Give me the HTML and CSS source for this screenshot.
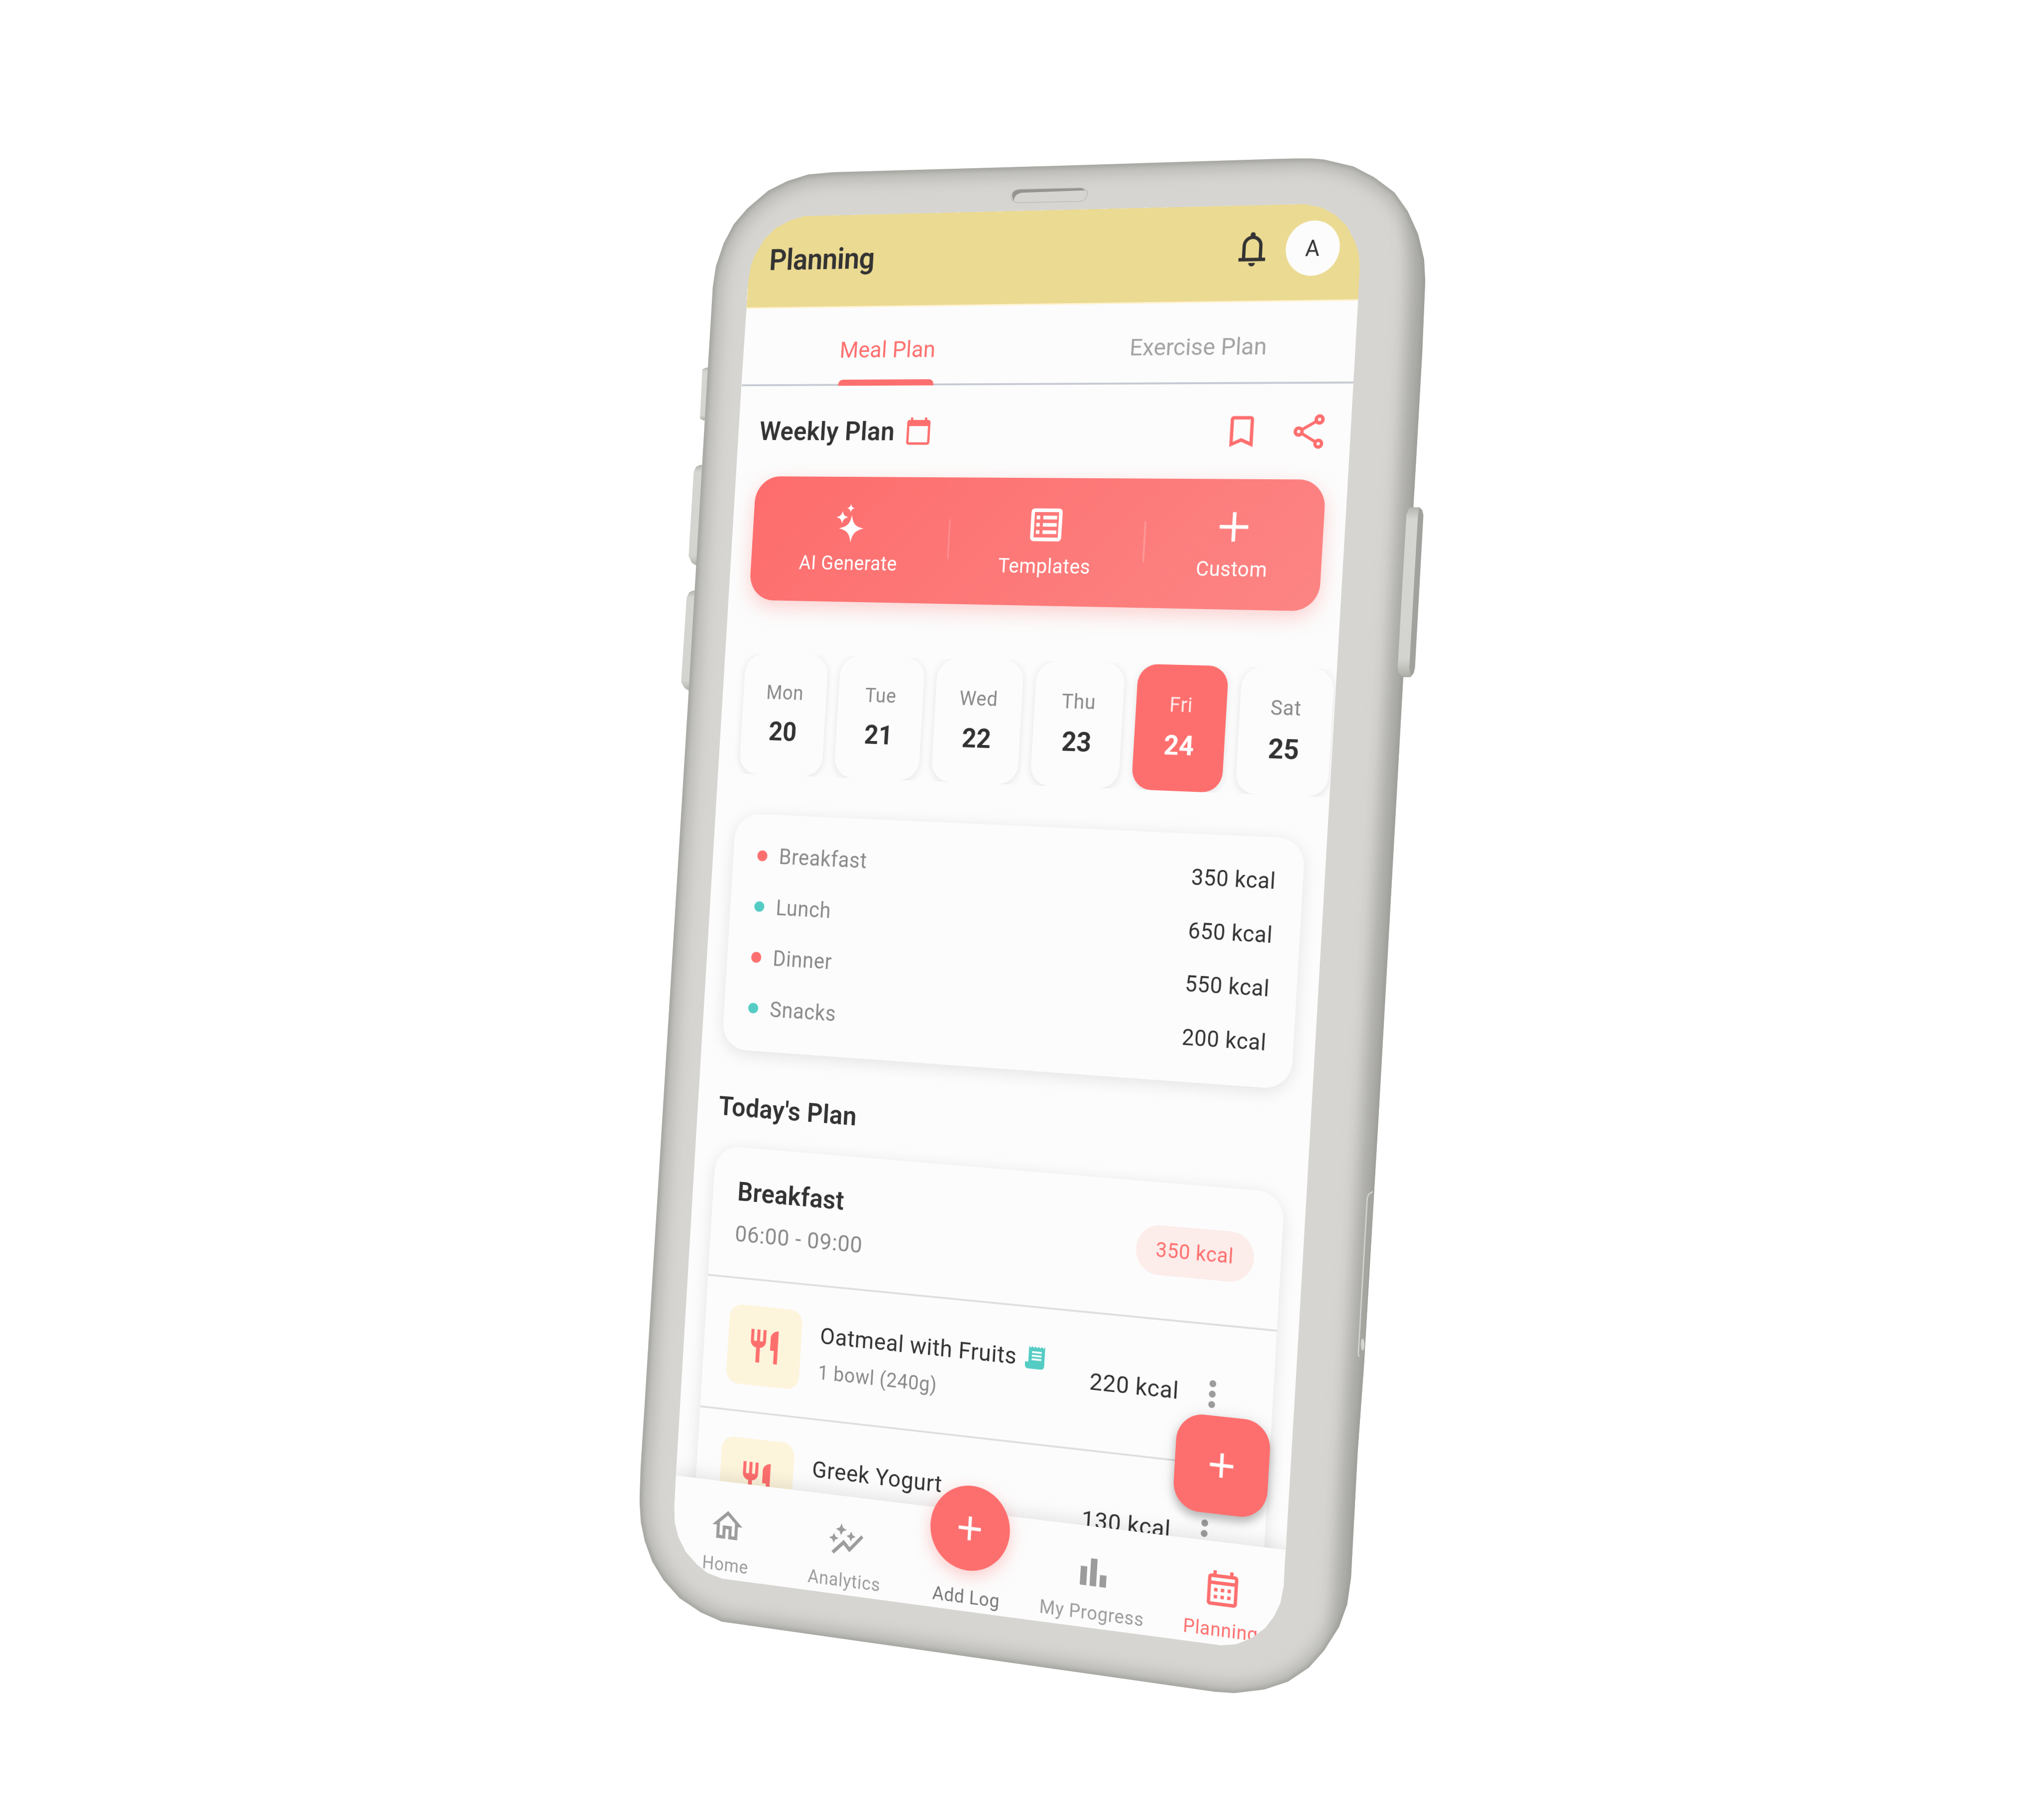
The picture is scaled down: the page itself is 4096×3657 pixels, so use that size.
FILE: index.html
```html
<!DOCTYPE html>
<html lang="en">
<head>
<meta charset="utf-8">
<title>Planning</title>
<link rel="stylesheet" href="styles.css">
</head>
<body>
<svg class="defs" aria-hidden="true">
  <symbol id="i-bell" viewBox="0 0 24 24"><path d="M4 19v-2h2v-7q0-2.075 1.25-3.687T10.5 4.2v-.7q0-.625.438-1.062T12 2t1.063.438T13.5 3.5v.7q2 .5 3.25 2.113T18 10v7h2v2zm8 3q-.825 0-1.412-.587T10 20h4q0 .825-.587 1.413T12 22m-4-5h8v-7q0-1.65-1.175-2.825T12 6 9.175 7.175 8 10z"/></symbol>
  <symbol id="i-cal" viewBox="0 0 24 24"><path d="M20 3h-1V1h-2v2H7V1H5v2H4c-1.1 0-2 .9-2 2v16c0 1.1.9 2 2 2h16c1.1 0 2-.9 2-2V5c0-1.1-.9-2-2-2zm0 18H4V8h16v13z"/></symbol>
  <symbol id="i-mark" viewBox="0 0 24 24"><path d="M17 3H7c-1.1 0-2 .9-2 2v16l7-3 7 3V5c0-1.1-.9-2-2-2zm0 15l-5-2.18L7 18V5h10v13z"/></symbol>
  <symbol id="i-share" viewBox="0 0 24 24"><path d="M18 16.08c-.76 0-1.44.3-1.96.77L8.91 12.7c.05-.23.09-.46.09-.7s-.04-.47-.09-.7l7.05-4.11c.54.5 1.25.81 2.04.81 1.66 0 3-1.34 3-3s-1.34-3-3-3-3 1.34-3 3c0 .24.04.47.09.7L8.04 9.81C7.5 9.31 6.79 9 6 9c-1.66 0-3 1.34-3 3s1.34 3 3 3c.79 0 1.5-.31 2.04-.81l7.12 4.16c-.05.21-.08.43-.08.65 0 1.61 1.31 2.92 2.92 2.92s2.92-1.31 2.92-2.92-1.31-2.92-2.92-2.92zM18 4c.55 0 1 .45 1 1s-.45 1-1 1-1-.45-1-1 .45-1 1-1zM6 13c-.55 0-1-.45-1-1s.45-1 1-1 1 .45 1 1-.45 1-1 1zm12 7.02c-.55 0-1-.45-1-1s.45-1 1-1 1 .45 1 1-.45 1-1 1z"/></symbol>
  <symbol id="i-stars" viewBox="0 0 26 26"><path d="M14 8.2C14.9 13.8 16.6 15.4 22.1 16.5C16.6 17.8 14.9 19.6 14 25.2C13.1 19.6 11.4 17.8 5.9 16.5C11.4 15.4 13.1 13.8 14 8.2zM7.8 5.9C8.4 8.4 9.2 9.2 11.9 9.7C9.2 10.3 8.4 11.1 7.8 13.6C7.2 11.1 6.4 10.3 3.7 9.7C6.4 9.2 7.2 8.4 7.8 5.9zM13 1.5C13.4 3.3 13.9 3.8 15.5 4.2C13.9 4.6 13.4 5.1 13 6.9C12.6 5.1 12.1 4.6 10.5 4.2C12.1 3.8 12.6 3.3 13 1.5z"/></symbol>
  <symbol id="i-list" viewBox="0 0 24 24"><path fill-rule="evenodd" d="M5 3h14a2 2 0 0 1 2 2v14a2 2 0 0 1-2 2H5a2 2 0 0 1-2-2V5a2 2 0 0 1 2-2zm0 2v14h14V5zM6.2 7h2v2h-2zM10 7h8v2h-8zM6.2 11h2v2h-2zM10 11h8v2h-8zM6.2 15h2v2h-2zM10 15h8v2h-8z"/></symbol>
  <symbol id="i-plus-lg" viewBox="0 0 26 26"><path d="M11.9 4.4h2.2v7.5h7.5v2.2h-7.5v7.5h-2.2v-7.5H4.4v-2.2h7.5z"/></symbol>
  <symbol id="i-plus" viewBox="0 0 24 24"><path d="M19 13h-6v6h-2v-6H5v-2h6V5h2v6h6z"/></symbol>
  <symbol id="i-food" viewBox="0 0 24 24"><path d="M11 9H9V2H7v7H5V2H3v7c0 2.12 1.66 3.84 3.75 3.97V22h2.5v-9.03C11.34 12.84 13 11.12 13 9V2h-2v7zm5-3v8h2.5v8H21V2c-2.76 0-5 2.24-5 4z"/></symbol>
  <symbol id="i-receipt" viewBox="0 0 24 24"><path fill-rule="evenodd" d="M19.5 3.5L18 2l-1.5 1.5L15 2l-1.5 1.5L12 2l-1.5 1.5L9 2 7.5 3.5 6 2v14H3v3c0 1.66 1.34 3 3 3h12c1.66 0 3-1.34 3-3V2zM9 6.4h9v1.6H9zM9 9.6h9v1.6H9zM9 12.8h9v1.6H9z"/></symbol>
  <symbol id="i-more" viewBox="0 0 24 24"><path d="M12 8c1.1 0 2-.9 2-2s-.9-2-2-2-2 .9-2 2 .9 2 2 2zm0 2c-1.1 0-2 .9-2 2s.9 2 2 2 2-.9 2-2-.9-2-2-2zm0 6c-1.1 0-2 .9-2 2s.9 2 2 2 2-.9 2-2-.9-2-2-2z"/></symbol>
  <symbol id="i-home" viewBox="0 0 24 24"><path d="M12 5.69l5 4.5V18h-2v-6H9v6H7v-7.81l5-4.5M12 3L2 12h3v8h6v-6h2v6h6v-8h3L12 3z"/></symbol>
  <symbol id="i-graph" viewBox="0 0 24 24"><path d="M14.06 9.94L12 9l2.06-.94L15 6l.94 2.06L18 9l-2.06.94L15 12zM4 14l.94-2.06L7 11l-2.06-.94L4 8l-.94 2.06L1 11l2.06.94zM8.5 9l1.09-2.41L12 5.5 9.59 4.41 8.5 2 7.41 4.41 5 5.5l2.41 1.09zM4.5 20.5l6-6.01 4 4L23 8.93l-1.41-1.41-7.09 7.97-4-4L3 19z"/></symbol>
  <symbol id="i-bars" viewBox="0 0 24 24"><path d="M4 9h4v11H4zM16 13h4v7h-4zM10 4h4v16h-4z"/></symbol>
  <symbol id="i-month" viewBox="0 0 24 24"><path d="M19 4h-1V2h-2v2H8V2H6v2H5c-1.11 0-1.99.9-1.99 2L3 20c0 1.1.89 2 2 2h14c1.1 0 2-.9 2-2V6c0-1.1-.9-2-2-2zm0 16H5V10h14v10zm0-12H5V6h14v2zM9 14H7v-2h2v2zm4 0h-2v-2h2v2zm4 0h-2v-2h2v2zm-8 4H7v-2h2v2zm4 0h-2v-2h2v2zm4 0h-2v-2h2v2z"/></symbol>
</svg>

<div class="screen">
  <div class="app">
    <header class="bar">
      <h1 class="bar-title">Planning</h1>
      <svg class="icon bell"><use href="#i-bell"/></svg>
      <span class="avatar">A</span>
    </header>
    <nav class="tabs">
      <span class="tab tab-on"><span class="tab-label">Meal Plan</span></span>
      <span class="tab">Exercise Plan</span>
    </nav>
    <main class="main">
      <div class="week-head">
        <h2 class="h2">Weekly Plan</h2>
        <svg class="icon cal"><use href="#i-cal"/></svg>
        <svg class="icon push"><use href="#i-mark"/></svg>
        <svg class="icon share"><use href="#i-share"/></svg>
      </div>
      <div class="actions">
        <div class="action"><svg class="icon26"><use href="#i-stars"/></svg><span>AI Generate</span></div>
        <i class="sep"></i>
        <div class="action"><svg class="icon26"><use href="#i-list"/></svg><span>Templates</span></div>
        <i class="sep"></i>
        <div class="action"><svg class="icon26"><use href="#i-plus-lg"/></svg><span>Custom</span></div>
      </div>
      <div class="days">
        <div class="day"><span class="dow">Mon</span><b class="num">20</b></div>
        <div class="day"><span class="dow">Tue</span><b class="num">21</b></div>
        <div class="day"><span class="dow">Wed</span><b class="num">22</b></div>
        <div class="day"><span class="dow">Thu</span><b class="num">23</b></div>
        <div class="day day-on"><span class="dow">Fri</span><b class="num">24</b></div>
        <div class="day"><span class="dow">Sat</span><b class="num">25</b></div>
      </div>
      <section class="card summary">
        <div class="row"><i class="dot"></i><span>Breakfast</span><b class="kcal">350 kcal</b></div>
        <div class="row"><i class="dot teal"></i><span>Lunch</span><b class="kcal">650 kcal</b></div>
        <div class="row"><i class="dot"></i><span>Dinner</span><b class="kcal">550 kcal</b></div>
        <div class="row"><i class="dot teal"></i><span>Snacks</span><b class="kcal">200 kcal</b></div>
      </section>
      <h2 class="h2 today">Today's Plan</h2>
      <section class="card meal">
        <div class="meal-head">
          <div class="stack"><h3 class="meal-name">Breakfast</h3><span class="time">06:00 - 09:00</span></div>
          <span class="badge">350 kcal</span>
        </div>
        <div class="item">
          <span class="thumb"><svg class="icon"><use href="#i-food"/></svg></span>
          <div class="item-text">
            <span class="item-name">Oatmeal with Fruits<svg class="receipt"><use href="#i-receipt"/></svg></span>
            <span class="item-sub">1 bowl (240g)</span>
          </div>
          <b class="item-kcal">220 kcal</b>
          <span class="more"><svg class="icon"><use href="#i-more"/></svg></span>
        </div>
        <div class="item">
          <span class="thumb"><svg class="icon"><use href="#i-food"/></svg></span>
          <div class="item-text">
            <span class="item-name">Greek Yogurt</span>
            <span class="item-sub">1 cup (150g)</span>
          </div>
          <b class="item-kcal">130 kcal</b>
          <span class="more"><svg class="icon"><use href="#i-more"/></svg></span>
        </div>
      </section>
    </main>
    <nav class="bottom">
      <div class="tabitem"><svg class="icon"><use href="#i-home"/></svg><span>Home</span></div>
      <div class="tabitem"><svg class="icon"><use href="#i-graph"/></svg><span>Analytics</span></div>
      <div class="tabitem add"><span class="add-btn"><svg class="icon"><use href="#i-plus"/></svg></span><span>Add Log</span></div>
      <div class="tabitem"><svg class="icon"><use href="#i-bars"/></svg><span>My Progress</span></div>
      <div class="tabitem here"><svg class="icon"><use href="#i-month"/></svg><span>Planning</span></div>
    </nav>
    <span class="fab"><svg class="icon"><use href="#i-plus"/></svg></span>
  </div>
</div>

<svg class="phone" viewBox="0 0 4480 4000" aria-hidden="true">
  <defs>
    <path id="outline" d="M1560 732L1566 631L1573 585L1590 535L1612 493L1642 458L1688 419L1730 398L1776 383.5L1831 378.5L2320 364.5L2846 348L2880 348L2909 350.5L2974 366L3020 390L3064 423L3093 464L3116 515L3129 570L3131.5 618L3125 774L3111 1020L3082.5 1502L3031 2420L2997 3000L2983 3193L2968.5 3467L2960 3526L2942 3576L2909 3628L2876 3665L2830 3696L2777 3713.5L2712 3721L2668 3718L2240 3657L1586 3564L1540 3544L1493 3512.5L1458 3473L1433 3432L1416.5 3387L1408 3346L1405 3300L1407.5 3225L1415.5 3100L1460 2380L1512.5 1530L1557 780Z"/>
    <path id="hole" d="M1768 475L1737 484L1705 501L1680 525L1659 560L1650 583L1645 612L1641.5 642L1640 679L1629 847L1600.5 1320L1534 2420L1493.5 3100L1485 3243L1481.5 3310L1482.5 3346L1490.5 3378.5L1507 3411L1530.5 3437.5L1554 3457L1586.5 3469.5L2260 3560L2682.5 3616L2717 3613.5L2750 3600L2780 3578L2799.5 3552L2813 3524L2820.5 3486L2823 3434L2825 3406L2849 3000L2963.5 1020L2984 659L2987 600L2987.5 583L2985 555L2977 531L2958.5 496L2933 472L2904 456L2865 448.5L2320 461.5Z"/>
    <clipPath id="in-body"><use href="#outline"/></clipPath>
    <mask id="bezel"><rect width="4480" height="4000" fill="#fff"/><use href="#hole" fill="#000"/></mask>
    <filter id="b6" filterUnits="userSpaceOnUse" x="1300" y="200" width="2000" height="3700"><feGaussianBlur stdDeviation="5"/></filter>
    <filter id="b18" filterUnits="userSpaceOnUse" x="1300" y="200" width="2000" height="3700"><feGaussianBlur stdDeviation="18"/></filter>
    <linearGradient id="btn" x1="0" y1="0" x2="0" y2="1"><stop offset="0" stop-color="#b4b4af"/><stop offset=".07" stop-color="#d5d5d1"/><stop offset=".9" stop-color="#d3d3cf"/><stop offset=".94" stop-color="#c6c6c1"/><stop offset="1" stop-color="#b0b0ab"/></linearGradient>
  </defs>
  <path fill="url(#btn)" d="M1551 808H1562L1555 924H1545L1538 920L1543 812Z"/>
  <path fill="url(#btn)" d="M1538 1022H1550L1538 1243H1530L1520 1237L1513 1222L1524 1038L1529 1026Z"/>
  <path fill="url(#btn)" d="M1522 1298H1535L1520 1518H1513L1504 1512L1496.5 1499L1508.5 1314L1514 1302Z"/>
  <g mask="url(#bezel)">
    <g clip-path="url(#in-body)">
      <use href="#outline" fill="#d6d5d1"/>
      <use href="#outline" fill="none" stroke="#a6a6a1" stroke-width="38" stroke-opacity=".75" filter="url(#b18)"/>
      <use href="#outline" fill="none" stroke="#94948f" stroke-width="9" stroke-opacity=".75" filter="url(#b6)"/>
      <path d="M3150 250L3133 515L3131.5 618L3111 1020L3031 2420L2968.5 3467L2966 3560L2985 3760" fill="none" stroke="#9a9a95" stroke-width="74" stroke-opacity=".6" filter="url(#b18)"/>
    </g>
  </g>
  <g fill="none">
    <path d="M2236 445.5Q2221 443 2221.5 432Q2223 417 2240 416L2372 413Q2389 413 2389 425Q2388 441 2372 442.5Z" fill="#d6d5d2" stroke="#c0c0bc" stroke-width="2"/>
    <path d="M2227 442Q2220 426 2229 420Q2235 416.5 2245 416.5L2376 413.5L2385 418.5L2245 423.5Q2229 426 2227 442Z" fill="#949490"/>
  </g>
  <g>
    <path d="M3006 2630L3012 2621L3017 2618L2995 2984L2985 2980Z" fill="#a6a6a1"/>
    <path d="M3016 2619L3007 2625L3004 2634L2984.5 2975L2986 2982" fill="none" stroke="#d2d2cf" stroke-width="3"/>
    <ellipse cx="2994" cy="2955" rx="4" ry="13" fill="#d4d4d0"/>
  </g>
  <path fill="#a1a19d" d="M3096 1115H3119L3125 1121L3127.5 1132L3109 1468L3106 1480L3099 1488H3080L3073 1479L3071 1465L3090 1132Z"/>
  <path fill="url(#btn)" d="M3096 1115H3118L3115 1140L3096.5 1467L3099 1486H3080L3073 1479L3071 1465L3090 1132Z"/>
</svg>
</body>
</html>
```
FILE: styles.css
```css
/* 1rem = 10 units of the phone's own layout */
html {
  font-size: 35px;
}

* {
  box-sizing: border-box;
}

body {
  margin: 0;
  width: 4096px;
  height: 3657px;
  position: relative;
  overflow: hidden;
  background: #fff;
  font-family: Roboto, "Liberation Sans", sans-serif;
  color: #333;
}

h1, h2, h3 {
  margin: 0;
}

.defs {
  position: absolute;
  width: 0;
  height: 0;
}

.phone {
  position: absolute;
  left: 0;
  top: 0;
  width: 4096px;
  height: 3657px;
}

/* The flat screen, projected onto the tilted phone */
.screen {
  position: absolute;
  left: 0;
  top: 0;
  width: 38.4rem;
  height: 83.2rem;
  overflow: hidden;
  background: #fcfcfc;
  transform-origin: 0 0;
  transform: matrix3d(
    0.780253, -0.0418437, 0, -0.000048974,
    -0.0590549, 0.928697, 0, -0.00000188805,
    0, 0, 1, 0,
    1510.583, 436.571, 0, 1);
}

.app {
  position: relative;
  display: flex;
  flex-direction: column;
  width: 39rem;
  height: 83.2rem;
  margin-left: -0.26rem;
  letter-spacing: 0.025rem;
}

.icon {
  display: block;
  width: 2.4rem;
  height: 2.4rem;
  fill: currentColor;
  flex: none;
}

.bar {
  display: flex;
  align-items: center;
  flex: none;
  height: 5.66rem;
  padding: 0 1.6rem 0.42rem;
  background: #ebda92;
  border-bottom: 0.1rem solid #fff2cf;
}

.bar-title {
  padding-top: 0.18rem;
  font-size: 1.8rem;
  font-weight: 600;
  letter-spacing: -0.018rem;
}

.bell {
  margin-left: auto;
}

.avatar {
  width: 3.2rem;
  height: 3.2rem;
  margin-left: 0.8rem;
  border-radius: 50%;
  background: #fcfcfc;
  display: flex;
  align-items: center;
  justify-content: center;
  font-size: 1.3rem;
}

.tabs {
  display: flex;
  flex: none;
  height: 4.76rem;
  border-bottom: 0.12rem solid #c6cad3;
  font-size: 1.4rem;
  font-weight: 400;
  letter-spacing: 0;
  color: #a3a3a3;
}

.tab {
  flex: 1;
  position: relative;
  display: flex;
  align-items: center;
  justify-content: center;
  padding-top: 0.5rem;
}

.tab-on {
  color: #fd6f6e;
  letter-spacing: 0.006rem;
}

.tab-on::after {
  content: "";
  position: absolute;
  left: 50%;
  bottom: -0.12rem;
  width: 6.2rem;
  height: 0.36rem;
  margin-left: -3.08rem;
  border-radius: 0.3rem 0.3rem 0 0;
  background: #fd6f6e;
}

.main {
  flex: 1;
  min-height: 0;
  overflow: hidden;
}

.h2 {
  font-size: 1.6rem;
  font-weight: 600;
  letter-spacing: 0.014rem;
}

.week-head {
  display: flex;
  align-items: center;
  height: 5.54rem;
  padding: 0 1.6rem 0 1.64rem;
  color: #fd6f6e;
}

.week-head .h2 {
  color: #333;
}

.cal {
  width: 1.8rem;
  height: 1.8rem;
  margin-left: 0.63rem;
}

.push {
  margin-left: auto;
}

.share {
  margin-left: 1.6rem;
}

.actions {
  display: flex;
  align-items: center;
  justify-content: space-evenly;
  height: 7.61rem;
  margin: 0 1.6rem;
  padding-bottom: 0.16rem;
  border-radius: 1.6rem;
  background: linear-gradient(135deg, #fd6c6c, #fc8584);
  box-shadow: 0 0.4rem 1.2rem rgba(253, 111, 110, 0.3);
  color: #fff;
}

.action {
  display: flex;
  flex-direction: column;
  align-items: center;
  gap: 0.45rem;
  font-size: 1.2rem;
  line-height: 1.4rem;
  letter-spacing: 0.018rem;
}

.icon26 {
  display: block;
  width: 2.6rem;
  height: 2.6rem;
  fill: currentColor;
}

.sep {
  width: 0.1rem;
  height: 2.4rem;
  background: rgba(255, 255, 255, 0.2);
}

.days {
  display: flex;
  gap: 0.785rem;
  height: 7.36rem;
  margin-top: 3.3rem;
  padding-left: 1.63rem;
  overflow: hidden;
}

.day {
  flex: none;
  width: 5.5rem;
  height: 7.36rem;
  display: flex;
  flex-direction: column;
  align-items: center;
  justify-content: center;
  gap: 0.74rem;
  padding-bottom: 0.08rem;
  border-radius: 1.2rem;
  background: #fcfcfc;
  box-shadow: 0 0.1rem 0.5rem rgba(0, 0, 0, 0.1);
}

.dow {
  font-size: 1.2rem;
  line-height: 1.4rem;
  color: #8a8a8a;
}

.num {
  font-size: 1.6rem;
  line-height: 1.9rem;
  font-weight: 700;
  letter-spacing: 0;
}

.day-on {
  background: #fd6f6e;
  color: #fff;
}

.day-on .dow {
  color: #ffe9e9;
}

.card {
  margin: 0 1.6rem;
  border-radius: 1.6rem;
  background: #fcfcfc;
  box-shadow: 0 0.2rem 1rem rgba(0, 0, 0, 0.1);
}

.summary {
  height: 14.43rem;
  margin-top: 2.43rem;
  padding: 0.98rem 1.6rem 0;
}

.row {
  display: flex;
  align-items: center;
  height: 3.1rem;
  font-size: 1.3rem;
  color: #8a8a8a;
}

.dot {
  width: 0.65rem;
  height: 0.65rem;
  margin-right: 0.79rem;
  border-radius: 50%;
  background: #fd6f6e;
}

.teal {
  background: #54ccc4;
}

.kcal {
  margin-left: auto;
  font-weight: 400;
  color: #333;
}

.today {
  height: 5.91rem;
  margin-left: 1.64rem;
  padding-top: 2.55rem;
  line-height: 1.9rem;
}

.meal-head {
  display: flex;
  align-items: center;
  justify-content: space-between;
  height: 7.97rem;
  padding: 0 1.6rem 0 1.63rem;
  border-bottom: 0.12rem solid #dfdfdf;
}

.stack {
  display: flex;
  flex-direction: column;
  gap: 0.8rem;
  padding-bottom: 0.06rem;
}

.meal-name {
  font-size: 1.6rem;
  line-height: 1.9rem;
  font-weight: 600;
  letter-spacing: 0.01rem;
}

.time {
  font-size: 1.4rem;
  line-height: 1.6rem;
  color: #8a8a8a;
}

.badge {
  padding: 0.65rem 1.2rem;
  border-radius: 1.6rem;
  background: #fcecea;
  color: #fd6f6e;
  font-size: 1.2rem;
  line-height: 1.6rem;
}

.item {
  display: flex;
  align-items: center;
  height: 8.03rem;
  padding: 0 1.6rem;
  border-bottom: 0.12rem solid #dfdfdf;
}

.thumb {
  display: flex;
  align-items: center;
  justify-content: center;
  width: 4.8rem;
  height: 4.8rem;
  border-radius: 0.8rem;
  background: #fdf4dc;
  color: #fd6f6e;
}

.item-text {
  display: flex;
  flex-direction: column;
  gap: 0.66rem;
  margin-left: 1.22rem;
}

.item-name {
  display: flex;
  align-items: center;
  font-size: 1.4rem;
  line-height: 1.7rem;
  font-weight: 400;
}

.receipt {
  width: 1.6rem;
  height: 1.6rem;
  margin-left: 0.34rem;
  fill: #54ccc4;
}

.item-sub {
  font-size: 1.2rem;
  line-height: 1.4rem;
  color: #8a8a8a;
}

.item-kcal {
  margin-left: auto;
  font-size: 1.4rem;
  font-weight: 400;
}

.more {
  display: flex;
  justify-content: center;
  width: 4rem;
  color: #9c9c9c;
}

.bottom {
  position: relative;
  display: flex;
  flex: none;
  height: 5.88rem;
  background: #fcfcfc;
  box-shadow: 0 -0.2rem 1rem rgba(0, 0, 0, 0.1);
}

.tabitem {
  flex: 1;
  display: flex;
  flex-direction: column;
  align-items: center;
  gap: 0.52rem;
  padding-top: 1.46rem;
  font-size: 1.1rem;
  line-height: 1.3rem;
  color: #9c9c9c;
  white-space: nowrap;
}

.here {
  color: #fd6f6e;
}

.add {
  padding-top: 0;
  gap: 0.91rem;
  color: #777;
}

.add-btn {
  display: flex;
  align-items: center;
  justify-content: center;
  width: 5rem;
  height: 5rem;
  margin-top: -1.51rem;
  border-radius: 50%;
  background: #fd6f6e;
  color: #fff;
  box-shadow: 0 0.3rem 1rem rgba(253, 111, 110, 0.35);
}

.fab {
  position: absolute;
  right: 1.6rem;
  top: 70.14rem;
  display: flex;
  align-items: center;
  justify-content: center;
  width: 5.6rem;
  height: 5.6rem;
  border-radius: 1.6rem;
  background: #fd6f6e;
  color: #fff;
  box-shadow: 0 0.3rem 0.5rem rgba(0, 0, 0, 0.22), 0 0.1rem 1rem rgba(0, 0, 0, 0.1);
}
```
